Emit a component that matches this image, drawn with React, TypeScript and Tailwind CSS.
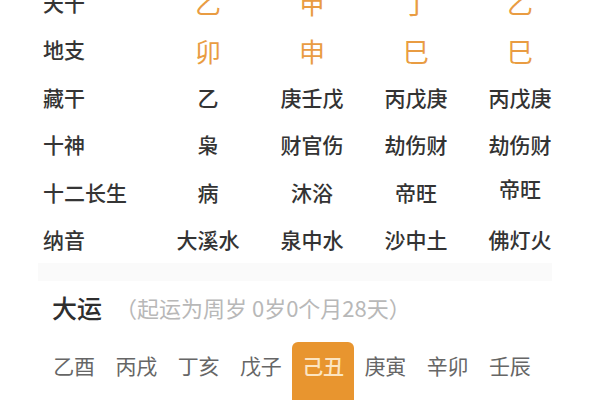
const font = { fontFamily: '"Noto Sans CJK SC", "Noto Sans", sans-serif' };

const rows: { label: string; values: string[]; accent?: boolean }[] = [
  { label: "天干", values: ["乙", "甲", "丁", "乙"], accent: true },
  { label: "地支", values: ["卯", "申", "巳", "巳"], accent: true },
  { label: "藏干", values: ["乙", "庚壬戊", "丙戊庚", "丙戊庚"] },
  { label: "十神", values: ["枭", "财官伤", "劫伤财", "劫伤财"] },
  { label: "十二长生", values: ["病", "沐浴", "帝旺", "帝旺"] },
  { label: "纳音", values: ["大溪水", "泉中水", "沙中土", "佛灯火"] },
];

const dayun = ["乙酉", "丙戌", "丁亥", "戊子", "己丑", "庚寅", "辛卯", "壬辰"];

const App = () => {
  return (
    <div className="w-[600px] h-[400px] overflow-hidden bg-white" style={font}>
      <div className="ml-[38px] w-[514px]">
        {/* 四柱表 */}
        <div className="-mt-[21px]">
          {rows.map((row) => (
            <div key={row.label} className="flex items-center h-[47.4px]">
              <div className="w-[118px] shrink-0 pl-[5px] text-[21px] font-medium text-[#353535]">{row.label}</div>
              {row.values.map((v, i) => (
                <div
                  key={i}
                  className={
                    row.accent
                      ? "w-[104px] shrink-0 text-center text-[26px] text-[#e99c42]"
                      : "w-[104px] shrink-0 text-center text-[21px] font-medium text-[#333333]"
                  }
                >
                  <span className={row.label === "十二长生" && i === 3 ? "relative -top-[4px]" : ""}>{v}</span>
                </div>
              ))}
            </div>
          ))}
        </div>

        <div className="h-[18px] bg-[#fafafa]" />

        {/* 大运 */}
        <div className="flex items-center h-[52px] pl-[14px] gap-[13px]">
          <span className="text-[25px] font-medium text-[#2e2e2e]">大运</span>
          <span className="text-[22px] text-[#b8b8b8]">（起运为周岁 0岁0个月28天）</span>
        </div>
        <div className="mt-[9px] ml-[5px] grid grid-cols-8 w-[498px]">
          {dayun.map((d) => (
            <div
              key={d}
              className={
                d === "己丑"
                  ? "h-[60px] pb-[14px] flex items-center justify-center rounded-t-[6px] bg-[#e8952f] text-[21px] font-medium text-[#fce5c2]"
                  : "h-[60px] pb-[14px] flex items-center justify-center text-[21px] text-[#666666]"
              }
            >
              {d}
            </div>
          ))}
        </div>
      </div>
    </div>
  );
};

export default App;
